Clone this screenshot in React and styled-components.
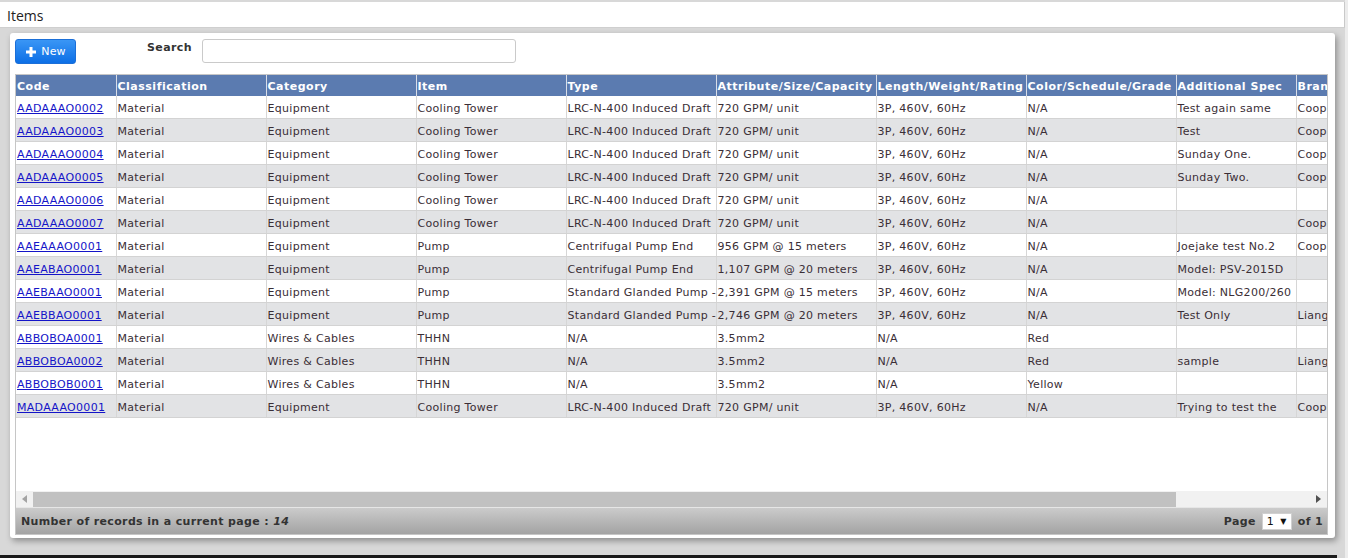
import React from 'react';
import styled, { createGlobalStyle } from 'styled-components';

const GlobalStyle = createGlobalStyle`
  html, body {
    margin: 0;
    padding: 0;
  }
  body {
    background: #d8d8d8;
    font-family: "DejaVu Sans", Verdana, sans-serif;
    overflow: hidden;
  }
`;

const columns = [
  { key: 'code', title: 'Code', width: 100 },
  { key: 'cls', title: 'Classification', width: 150 },
  { key: 'cat', title: 'Category', width: 150 },
  { key: 'item', title: 'Item', width: 150 },
  { key: 'type', title: 'Type', width: 150 },
  { key: 'attr', title: 'Attribute/Size/Capacity', width: 160 },
  { key: 'len', title: 'Length/Weight/Rating', width: 150 },
  { key: 'color', title: 'Color/Schedule/Grade', width: 150 },
  { key: 'spec', title: 'Additional Spec', width: 120 },
  { key: 'brand', title: 'Brand', width: 120 },
];

const tower = {
  cls: 'Material',
  cat: 'Equipment',
  item: 'Cooling Tower',
  type: 'LRC-N-400 Induced Draft',
  attr: '720 GPM/ unit',
  len: '3P, 460V, 60Hz',
  color: 'N/A',
};

const wire = {
  cls: 'Material',
  cat: 'Wires & Cables',
  item: 'THHN',
  type: 'N/A',
  attr: '3.5mm2',
  len: 'N/A',
};

const rows = [
  { ...tower, code: 'AADAAAO0002', spec: 'Test again same', brand: 'Cooper' },
  { ...tower, code: 'AADAAAO0003', spec: 'Test', brand: 'Cooper' },
  { ...tower, code: 'AADAAAO0004', spec: 'Sunday One.', brand: 'Cooper' },
  { ...tower, code: 'AADAAAO0005', spec: 'Sunday Two.', brand: 'Cooper' },
  { ...tower, code: 'AADAAAO0006', spec: '', brand: '' },
  { ...tower, code: 'AADAAAO0007', spec: '', brand: 'Cooper' },
  { ...tower, code: 'AAEAAAO0001', item: 'Pump', type: 'Centrifugal Pump End', attr: '956 GPM @ 15 meters', spec: 'Joejake test No.2', brand: 'Cooper' },
  { ...tower, code: 'AAEABAO0001', item: 'Pump', type: 'Centrifugal Pump End', attr: '1,107 GPM @ 20 meters', spec: 'Model: PSV-2015D', brand: '' },
  { ...tower, code: 'AAEBAAO0001', item: 'Pump', type: 'Standard Glanded Pump -', attr: '2,391 GPM @ 15 meters', spec: 'Model: NLG200/260', brand: '' },
  { ...tower, code: 'AAEBBAO0001', item: 'Pump', type: 'Standard Glanded Pump -', attr: '2,746 GPM @ 20 meters', spec: 'Test Only', brand: 'Liang' },
  { ...wire, code: 'ABBOBOA0001', color: 'Red', spec: '', brand: '' },
  { ...wire, code: 'ABBOBOA0002', color: 'Red', spec: 'sample', brand: 'Liang' },
  { ...wire, code: 'ABBOBOB0001', color: 'Yellow', spec: '', brand: '' },
  { ...tower, code: 'MADAAAO0001', spec: 'Trying to test the', brand: 'Cooper' },
];

function PlusIcon() {
  return (
    <svg width="10" height="10" viewBox="0 0 10 10">
      <rect x="3.5" y="0" width="3" height="10" fill="#fff" />
      <rect x="0" y="3.5" width="10" height="3" fill="#fff" />
    </svg>
  );
}

function Arrow({ dir }) {
  return (
    <svg width="5" height="8" viewBox="0 0 5 8">
      {dir === 'left'
        ? <polygon points="5,0 5,8 0,4" fill="#a3a3a3" />
        : <polygon points="0,0 0,8 5,4" fill="#505050" />}
    </svg>
  );
}

export default function App() {
  return (
    <>
      <GlobalStyle />
      <Page>
        <TopBar>
          <Title>Items</Title>
        </TopBar>
        <Panel>
          <Toolbar>
            <NewButton>
              <PlusIcon />
              <span>New</span>
            </NewButton>
            <SearchLabel>Search</SearchLabel>
            <SearchInput type="text" />
          </Toolbar>
          <Grid>
            <GridBody>
              <Table>
                <colgroup>
                  {columns.map((c) => (
                    <col key={c.key} style={{ width: c.width }} />
                  ))}
                </colgroup>
                <thead>
                  <tr>
                    {columns.map((c) => (
                      <Th key={c.key}>{c.title}</Th>
                    ))}
                  </tr>
                </thead>
                <tbody>
                  {rows.map((r, i) => (
                    <Tr key={r.code} $alt={i % 2 === 1}>
                      {columns.map((c) => (
                        <Td key={c.key}>
                          {c.key === 'code' ? <CodeLink href="#">{r.code}</CodeLink> : r[c.key]}
                        </Td>
                      ))}
                    </Tr>
                  ))}
                </tbody>
              </Table>
            </GridBody>
            <ScrollBar>
              <ScrollButton><Arrow dir="left" /></ScrollButton>
              <ScrollTrack>
                <Thumb />
              </ScrollTrack>
              <ScrollButton><Arrow dir="right" /></ScrollButton>
            </ScrollBar>
            <Footer>
              <Records>
                Number of records in a current page : <em>14</em>
              </Records>
              <Pager>
                <span>Page</span>
                <PageSelect>
                  <span>1</span>
                  <Caret>▼</Caret>
                </PageSelect>
                <span>of 1</span>
              </Pager>
            </Footer>
          </Grid>
        </Panel>
        <BottomLine />
      </Page>
    </>
  );
}

const Page = styled.div`
  height: 558px;
  display: flex;
  flex-direction: column;
  padding-top: 2px;
  box-sizing: border-box;
  border-right: 3px solid #ececec;
`;

const TopBar = styled.div`
  height: 26px;
  background: #fff;
  border-right: 1px solid #c9c9c9;
  border-bottom: 1px solid #cfcfcf;
  display: flex;
  align-items: center;
  padding-left: 7px;
  box-sizing: border-box;
`;

const Title = styled.div`
  font-family: "Open Sans", "Noto Sans", sans-serif;
  font-size: 14px;
  color: #222;
  margin-top: 1px;
`;

const Panel = styled.div`
  margin: 5px 0 0 10px;
  width: 1325px;
  height: 505px;
  background: #fff;
  border-radius: 3px;
  box-shadow: 2px 3px 6px rgba(0, 0, 0, 0.35);
  padding: 6px 7px 3px 5px;
  box-sizing: border-box;
  display: flex;
  flex-direction: column;
`;

const Toolbar = styled.div`
  height: 26px;
  display: flex;
  align-items: flex-start;
  margin-bottom: 9px;
`;

const NewButton = styled.button`
  width: 61px;
  height: 25px;
  border: 1px solid #1b6fd8;
  border-radius: 3px;
  background: linear-gradient(#3a96f5, #0c6fe6);
  color: #fff;
  font-family: "DejaVu Sans", Verdana, sans-serif;
  font-size: 11px;
  letter-spacing: 0.2px;
  display: flex;
  align-items: center;
  justify-content: center;
  gap: 5px;
  padding: 0 0 0 1px;
  cursor: pointer;
`;

const SearchLabel = styled.label`
  font-size: 11px;
  font-weight: bold;
  letter-spacing: 0.4px;
  color: #333;
  margin: 2px 10px 0 71px;
`;

const SearchInput = styled.input`
  width: 314px;
  height: 24px;
  box-sizing: border-box;
  border: 1px solid #cacaca;
  border-radius: 3px;
  outline: none;
`;

const Grid = styled.div`
  width: 1313px;
  height: 461px;
  box-sizing: border-box;
  border: 1px solid #c6c6c6;
  display: flex;
  flex-direction: column;
`;

const GridBody = styled.div`
  height: 416px;
  overflow: hidden;
  background: #fff;
`;

const Table = styled.table`
  table-layout: fixed;
  width: 1340px;
  border-collapse: collapse;
  font-size: 11px;
`;

const Th = styled.th`
  height: 21px;
  background: #5b7bb0;
  color: #fff;
  font-weight: bold;
  letter-spacing: 0.5px;
  text-align: left;
  padding: 1px 0 0 1px;
  white-space: nowrap;
  overflow: hidden;
  border-right: 1px solid #d8dde8;
  box-sizing: border-box;
`;

const Tr = styled.tr`
  background: ${(p) => (p.$alt ? '#e2e3e5' : '#fff')};
`;

const Td = styled.td`
  height: 20px;
  padding: 2px 2px 0 1px;
  color: #3a2e36;
  white-space: nowrap;
  overflow: hidden;
  border-right: 1px solid #d6d6d6;
  border-bottom: 1px solid #d3d3d3;
  letter-spacing: 0.3px;
`;

const CodeLink = styled.a`
  color: #1414c8;
  text-decoration: underline;
`;

const ScrollBar = styled.div`
  height: 16px;
  display: flex;
  background: #f1f1f1;
`;

const ScrollButton = styled.div`
  width: 17px;
  display: flex;
  align-items: center;
  justify-content: center;
`;

const ScrollTrack = styled.div`
  flex: 1;
  display: flex;
  align-items: center;
`;

const Thumb = styled.div`
  width: 1143px;
  height: 15px;
  background: #c1c1c1;
`;

const Footer = styled.div`
  flex: 1;
  background: linear-gradient(#cbcbcb, #a3a3a3);
  display: flex;
  align-items: center;
  justify-content: space-between;
  padding: 0 4px 0 5px;
  font-size: 11px;
  font-weight: bold;
  letter-spacing: 0.35px;
  color: #333;
  border-top: 1px solid #e6e6e6;
`;

const Records = styled.div`
  & em {
    font-style: italic;
  }
`;

const Pager = styled.div`
  display: flex;
  align-items: center;
  gap: 6px;
`;

const PageSelect = styled.div`
  width: 30px;
  height: 17px;
  box-sizing: border-box;
  background: #fff;
  border: 1px solid #d0d0d0;
  display: flex;
  align-items: center;
  justify-content: space-between;
  padding: 0 4px 0 4px;
  font-weight: normal;
  color: #111;
`;

const Caret = styled.span`
  font-size: 8px;
`;

const BottomLine = styled.div`
  margin-top: auto;
  height: 3px;
  background: #1a1a1a;
  margin-right: 8px;
`;
